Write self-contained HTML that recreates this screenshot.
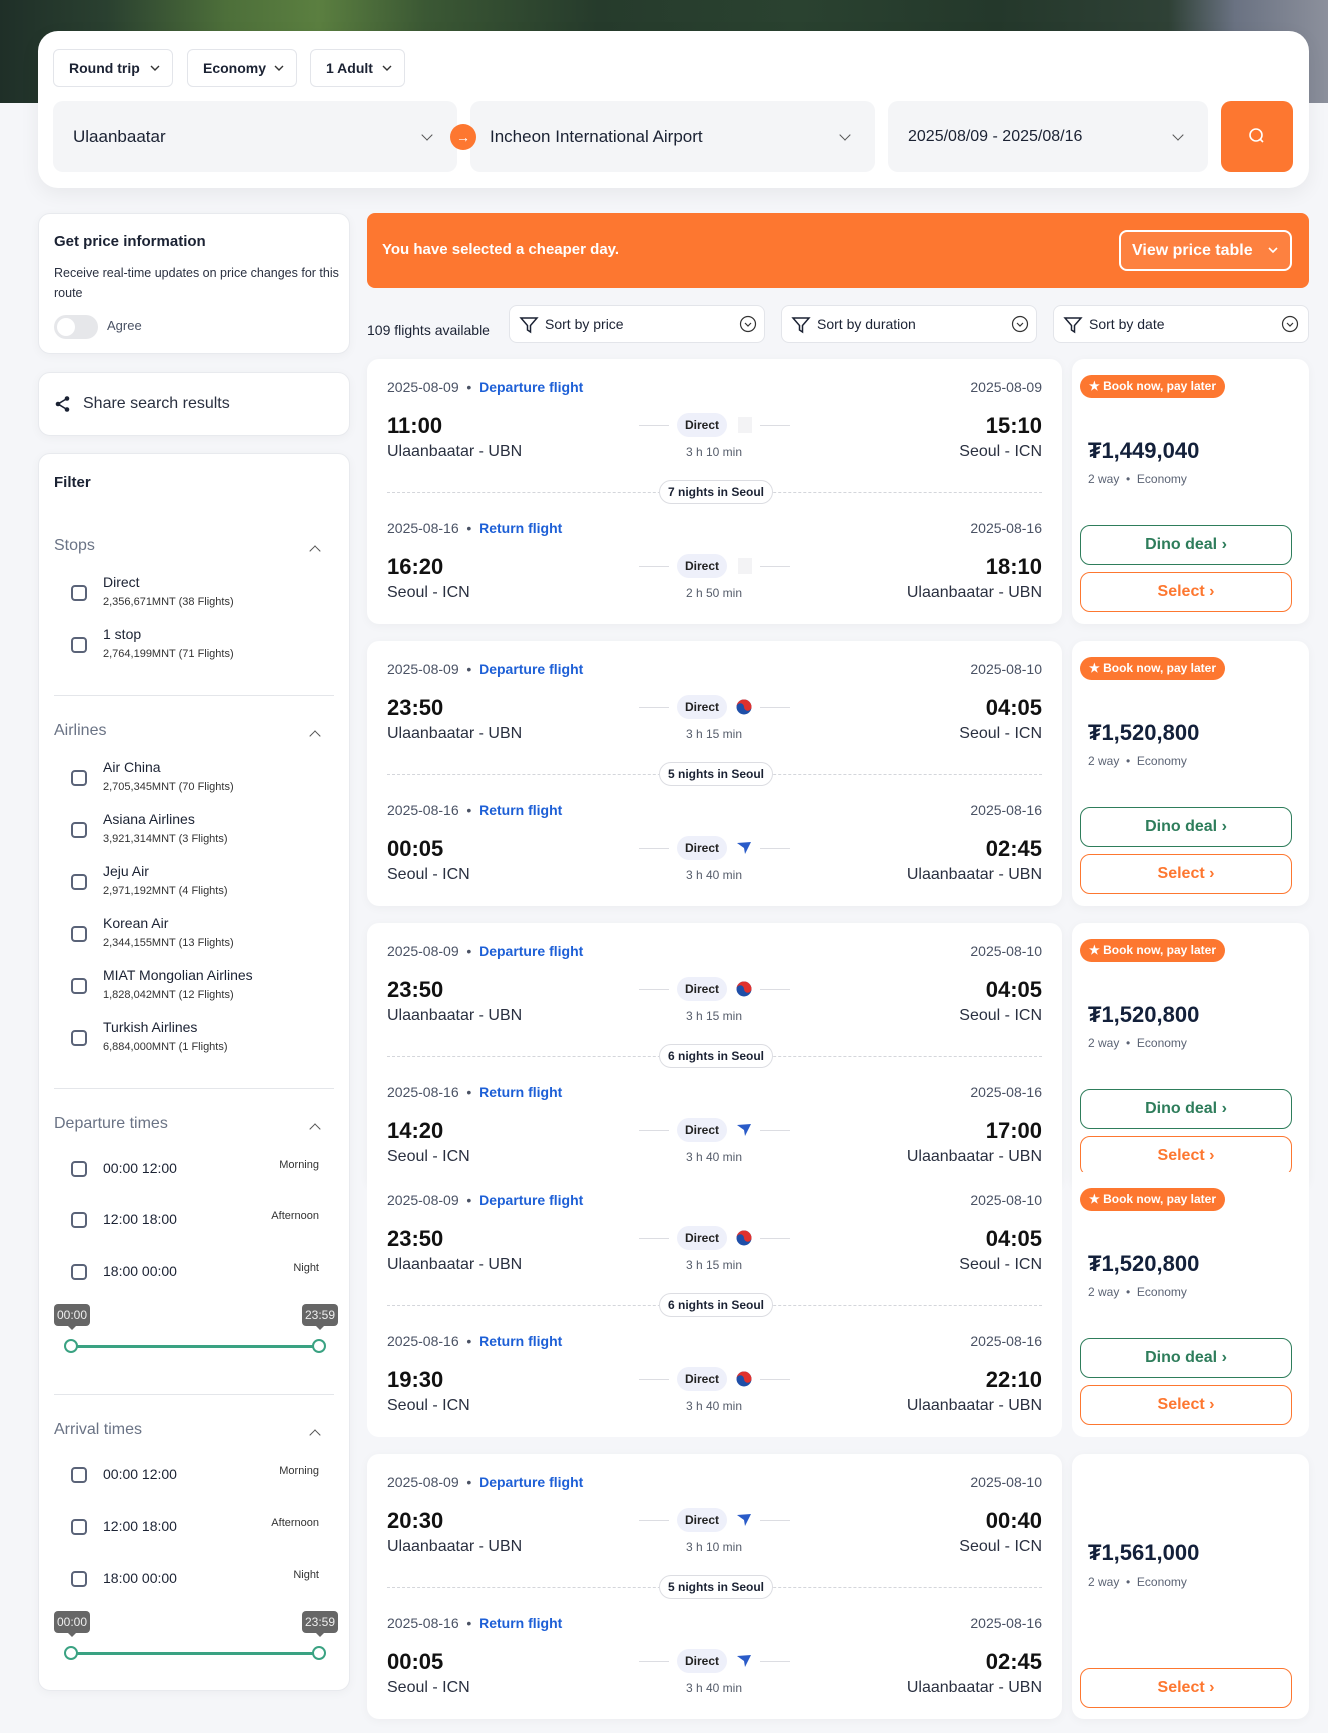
<!DOCTYPE html>
<html><head><meta charset="utf-8">
<style>
*{box-sizing:border-box;margin:0;padding:0}
body{width:1328px;height:1733px;overflow:hidden;background:#f5f6f9;font-family:"Liberation Sans",sans-serif;color:#1b2233;position:relative}
.abs{position:absolute}
.hero{left:0;top:0;width:1328px;height:103px;background:linear-gradient(90deg,#1f2f28 0%,#2a4030 8%,#4d6f3a 17%,#5b7f40 24%,#3b5834 32%,#263b2c 45%,#2a4230 60%,#24382b 75%,#2f4136 88%,#6a7282 93%,#8c909c 100%)}
.search{left:38px;top:31px;width:1271px;height:157px;background:#fff;border-radius:20px;box-shadow:0 6px 20px rgba(0,0,0,.06)}
.pill{top:18px;height:38px;border:1px solid #e3e5ea;border-radius:6px;font-size:14px;font-weight:bold;line-height:36px;padding-left:15px;color:#1b2233}
.pill svg{position:absolute;right:12px;top:15px}
.inp{top:70px;height:71px;background:#f4f5f7;border-radius:10px;font-size:17px;line-height:71px;padding-left:20px}
.chev{position:absolute;right:26px;top:30px;width:8px;height:8px;border-right:1.5px solid #555;border-bottom:1.5px solid #555;transform:rotate(45deg)}
.card{background:#fff;border-radius:12px;box-shadow:0 2px 10px rgba(0,0,0,.04)}
.lc{left:38px;width:312px;border:1px solid #e8eaee}
.fc{left:367px;width:695px;height:265px}
.rc{left:1072px;width:237px;height:265px}
.sm{font-size:14px;color:#4a5264}
.blue{color:#1d5fd6;font-weight:bold}
.time{font-size:22px;font-weight:bold;color:#111}
.city{font-size:16px;color:#2a3040}
.direct{width:50px;height:24px;border-radius:12px;background:#eef0fa;font-size:12px;font-weight:bold;text-align:center;line-height:24px;color:#222}
.hl{height:1px;width:30px;background:#dcdde2}
.dur{font-size:12px;color:#555c6a;width:120px;text-align:center}
.nights{height:24px;border:1px solid #dcdde2;border-radius:12px;background:#fff;font-size:12px;font-weight:bold;line-height:22px;padding:0 8px;}
.dash{left:20px;right:20px;height:0;border-top:1px dashed #d4d6db}
.badge{left:8px;top:16px;height:23px;width:145px;background:#fd7730;border-radius:12px;color:#fff;font-size:12px;font-weight:bold;line-height:23px;padding-left:9px}
.price{left:16px;font-size:22px;font-weight:bold;color:#13203a}
.way{left:16px;font-size:12px;color:#5b6374}
.btn{left:8px;width:212px;height:40px;border-radius:10px;text-align:center;line-height:38px;font-size:16px;font-weight:bold}
.dino{border:1.5px solid #2e7d5b;color:#2e7d5b}
.sel{border:1.5px solid #fd7730;color:#fd7730}
.sort{top:305px;height:38px;background:#fff;border:1px solid #e3e5ea;border-radius:8px;width:256px;font-size:14px;line-height:36px;padding-left:35px}
.cb{width:16px;height:16px;border:2px solid #5a6378;border-radius:4px;left:32px}
.fl{left:64px;font-size:14px;color:#1b2233}
.fs{left:64px;font-size:11px;color:#333}
.fh{left:15px;font-size:16px;color:#6a7385}
.up{right:30px;width:8px;height:8px;border-left:1.5px solid #555;border-top:1.5px solid #555;transform:rotate(45deg)}
.div{left:15px;right:15px;height:1px;background:#e4e6ea}
.tag{font-size:11px;color:#333;right:30px}
.tip{width:36px;height:22px;background:#666;border-radius:4px;color:#eee;font-size:12px;text-align:center;line-height:22px}
.tip:after{content:"";position:absolute;left:14px;bottom:-4px;border:4px solid transparent;border-top-color:#666;border-bottom:0}
.track{left:32px;width:248px;height:3px;background:#3aa282}
.knob{width:14px;height:14px;border-radius:50%;border:2px solid #3aa282;background:#fff}
</style></head><body>
<div class="abs hero"></div>
<div class="abs search">
 <div class="abs pill" style="left:15px;width:120px">Round trip<svg width="10" height="7"><path d="M1 1L5 5L9 1" fill="none" stroke="#333" stroke-width="1.4"/></svg></div>
 <div class="abs pill" style="left:149px;width:110px">Economy<svg width="10" height="7"><path d="M1 1L5 5L9 1" fill="none" stroke="#333" stroke-width="1.4"/></svg></div>
 <div class="abs pill" style="left:272px;width:95px">1 Adult<svg width="10" height="7"><path d="M1 1L5 5L9 1" fill="none" stroke="#333" stroke-width="1.4"/></svg></div>
 <div class="abs inp" style="left:15px;width:404px">Ulaanbaatar<div class="chev"></div></div>
 <div class="abs inp" style="left:432px;width:405px">Incheon International Airport<div class="chev"></div></div>
 <div class="abs" style="left:412px;top:93px;width:26px;height:26px;border-radius:50%;background:#fd7730;color:#fff;font-size:14px;text-align:center;line-height:26px;z-index:2">&#8594;</div>
 <div class="abs inp" style="left:850px;width:320px;font-size:16px">2025/08/09 - 2025/08/16<div class="chev"></div></div>
 <div class="abs" style="left:1183px;top:70px;width:72px;height:71px;background:#fd7730;border-radius:10px">
  <svg width="72" height="71"><circle cx="35" cy="34" r="6" fill="none" stroke="#fff" stroke-width="1.6"/><line x1="39.5" y1="38.5" x2="42" y2="41" stroke="#fff" stroke-width="1.6"/></svg></div>
</div>

<!-- left column -->
<div class="abs card lc" style="top:213px;height:141px">
 <div class="abs" style="left:15px;top:19px;font-size:15px;font-weight:bold">Get price information</div>
 <div class="abs" style="left:15px;top:49px;font-size:12.5px;line-height:20px;color:#2a3040;width:290px">Receive real-time updates on price changes for this route</div>
 <div class="abs" style="left:15px;top:101px;width:44px;height:24px;border-radius:12px;background:#e6e7ea"><div class="abs" style="left:3px;top:3px;width:18px;height:18px;border-radius:50%;background:#fff"></div></div>
 <div class="abs" style="left:68px;top:104px;font-size:13px;color:#4a5264">Agree</div>
</div>
<div class="abs card lc" style="top:372px;height:64px">
 <svg class="abs" style="left:15px;top:22px" width="18" height="18"><circle cx="13" cy="3.5" r="2.3" fill="#1b2233"/><circle cx="4" cy="9" r="2.3" fill="#1b2233"/><circle cx="13" cy="14.5" r="2.3" fill="#1b2233"/><path d="M13 3.5L4 9L13 14.5" stroke="#1b2233" stroke-width="1.6" fill="none"/></svg>
 <div class="abs" style="left:44px;top:22px;font-size:16px;color:#2a3040">Share search results</div>
</div>
<div class="abs card lc" style="top:453px;height:1238px">
 <div class="abs" style="left:15px;top:20px;font-size:15px;font-weight:bold">Filter</div>
 <div class="abs fh" style="top:83px">Stops</div><div class="abs up" style="top:93px"></div>
 <div class="abs cb" style="top:131px"></div><div class="abs fl" style="top:120px">Direct</div><div class="abs fs" style="top:142px">2,356,671MNT (38 Flights)</div>
 <div class="abs cb" style="top:183px"></div><div class="abs fl" style="top:172px">1 stop</div><div class="abs fs" style="top:194px">2,764,199MNT (71 Flights)</div>
 <div class="abs div" style="top:241px"></div>
 <div class="abs fh" style="top:268px">Airlines</div><div class="abs up" style="top:278px"></div>
 <div class="abs cb" style="top:316px"></div><div class="abs fl" style="top:305px">Air China</div><div class="abs fs" style="top:327px">2,705,345MNT (70 Flights)</div>
 <div class="abs cb" style="top:368px"></div><div class="abs fl" style="top:357px">Asiana Airlines</div><div class="abs fs" style="top:379px">3,921,314MNT (3 Flights)</div>
 <div class="abs cb" style="top:420px"></div><div class="abs fl" style="top:409px">Jeju Air</div><div class="abs fs" style="top:431px">2,971,192MNT (4 Flights)</div>
 <div class="abs cb" style="top:472px"></div><div class="abs fl" style="top:461px">Korean Air</div><div class="abs fs" style="top:483px">2,344,155MNT (13 Flights)</div>
 <div class="abs cb" style="top:524px"></div><div class="abs fl" style="top:513px">MIAT Mongolian Airlines</div><div class="abs fs" style="top:535px">1,828,042MNT (12 Flights)</div>
 <div class="abs cb" style="top:576px"></div><div class="abs fl" style="top:565px">Turkish Airlines</div><div class="abs fs" style="top:587px">6,884,000MNT (1 Flights)</div>
 <div class="abs div" style="top:634px"></div>
 <div class="abs fh" style="top:661px">Departure times</div><div class="abs up" style="top:671px"></div>
 <div class="abs cb" style="top:707px"></div><div class="abs fl" style="top:706px">00:00 12:00</div><div class="abs tag" style="top:705px">Morning</div>
 <div class="abs cb" style="top:758px"></div><div class="abs fl" style="top:757px">12:00 18:00</div><div class="abs tag" style="top:756px">Afternoon</div>
 <div class="abs cb" style="top:810px"></div><div class="abs fl" style="top:809px">18:00 00:00</div><div class="abs tag" style="top:808px">Night</div>
 <div class="abs tip" style="left:15px;top:850px">00:00</div><div class="abs tip" style="left:263px;top:850px">23:59</div>
 <div class="abs track" style="top:891px"></div><div class="abs knob" style="left:25px;top:885px"></div><div class="abs knob" style="left:273px;top:885px"></div>
 <div class="abs div" style="top:940px"></div>
 <div class="abs fh" style="top:967px">Arrival times</div><div class="abs up" style="top:977px"></div>
 <div class="abs cb" style="top:1013px"></div><div class="abs fl" style="top:1012px">00:00 12:00</div><div class="abs tag" style="top:1011px">Morning</div>
 <div class="abs cb" style="top:1065px"></div><div class="abs fl" style="top:1064px">12:00 18:00</div><div class="abs tag" style="top:1063px">Afternoon</div>
 <div class="abs cb" style="top:1117px"></div><div class="abs fl" style="top:1116px">18:00 00:00</div><div class="abs tag" style="top:1115px">Night</div>
 <div class="abs tip" style="left:15px;top:1157px">00:00</div><div class="abs tip" style="left:263px;top:1157px">23:59</div>
 <div class="abs track" style="top:1198px"></div><div class="abs knob" style="left:25px;top:1192px"></div><div class="abs knob" style="left:273px;top:1192px"></div>
</div>

<!-- banner -->
<div class="abs" style="left:367px;top:213px;width:942px;height:75px;background:#fd7730;border-radius:8px">
 <div class="abs" style="left:15px;top:28px;color:#fff;font-size:15px;font-weight:bold">You have selected a cheaper day.</div>
 <div class="abs" style="left:752px;top:17px;width:173px;height:41px;border:2px solid #fff;border-radius:8px;color:#fff;font-size:16px;font-weight:bold;line-height:37px;padding-left:11px;background:rgba(255,255,255,.08)">View price table<svg class="abs" style="right:12px;top:15px" width="10" height="7"><path d="M1 1L5 5L9 1" fill="none" stroke="#fff" stroke-width="1.6"/></svg></div>
</div>
<div class="abs" style="left:367px;top:322px;font-size:14px;color:#1b2233">109 flights available</div>
<div class="abs sort" style="left:509px">Sort by price</div>
<div class="abs sort" style="left:781px">Sort by duration</div>
<div class="abs sort" style="left:1053px">Sort by date</div>
<svg class="abs" style="left:519px;top:315px" width="20" height="20"><path d="M2 3H18L11.5 10.5V17L8.5 15V10.5Z" fill="none" stroke="#1b2233" stroke-width="1.5"/></svg>
<svg class="abs" style="left:791px;top:315px" width="20" height="20"><path d="M2 3H18L11.5 10.5V17L8.5 15V10.5Z" fill="none" stroke="#1b2233" stroke-width="1.5"/></svg>
<svg class="abs" style="left:1063px;top:315px" width="20" height="20"><path d="M2 3H18L11.5 10.5V17L8.5 15V10.5Z" fill="none" stroke="#1b2233" stroke-width="1.5"/></svg>
<svg class="abs" style="left:739px;top:315px" width="18" height="18"><circle cx="9" cy="9" r="7.5" fill="none" stroke="#333" stroke-width="1.2"/><path d="M6 8L9 11L12 8" fill="none" stroke="#333" stroke-width="1.2"/></svg>
<svg class="abs" style="left:1011px;top:315px" width="18" height="18"><circle cx="9" cy="9" r="7.5" fill="none" stroke="#333" stroke-width="1.2"/><path d="M6 8L9 11L12 8" fill="none" stroke="#333" stroke-width="1.2"/></svg>
<svg class="abs" style="left:1281px;top:315px" width="18" height="18"><circle cx="9" cy="9" r="7.5" fill="none" stroke="#333" stroke-width="1.2"/><path d="M6 8L9 11L12 8" fill="none" stroke="#333" stroke-width="1.2"/></svg>

<!-- CARD 1 -->
<div class="abs card fc" style="top:359px">
 <div class="abs sm" style="left:20px;top:20px">2025-08-09 &nbsp;•&nbsp; <span class="blue">Departure flight</span></div>
 <div class="abs sm" style="right:20px;top:20px">2025-08-09</div>
 <div class="abs time" style="left:20px;top:54px">11:00</div><div class="abs time" style="right:20px;top:54px">15:10</div>
 <div class="abs city" style="left:20px;top:84px">Ulaanbaatar - UBN</div><div class="abs city" style="right:20px;top:84px">Seoul - ICN</div>
 <div class="abs hl" style="left:272px;top:66px"></div><div class="abs direct" style="left:310px;top:54px">Direct</div><div class="abs" style="left:371px;top:58px;width:14px;height:16px;background:#f3f3f5"></div><div class="abs hl" style="left:393px;top:66px"></div>
 <div class="abs dur" style="left:287px;top:86px">3 h 10 min</div>
 <div class="abs dash" style="top:133px"></div><div class="abs nights" style="left:292px;top:121px">7 nights in Seoul</div>
 <div class="abs sm" style="left:20px;top:161px">2025-08-16 &nbsp;•&nbsp; <span class="blue">Return flight</span></div>
 <div class="abs sm" style="right:20px;top:161px">2025-08-16</div>
 <div class="abs time" style="left:20px;top:195px">16:20</div><div class="abs time" style="right:20px;top:195px">18:10</div>
 <div class="abs city" style="left:20px;top:225px">Seoul - ICN</div><div class="abs city" style="right:20px;top:225px">Ulaanbaatar - UBN</div>
 <div class="abs hl" style="left:272px;top:207px"></div><div class="abs direct" style="left:310px;top:195px">Direct</div><div class="abs" style="left:371px;top:199px;width:14px;height:16px;background:#f3f3f5"></div><div class="abs hl" style="left:393px;top:207px"></div>
 <div class="abs dur" style="left:287px;top:227px">2 h 50 min</div>
</div>
<div class="abs card rc" style="top:359px">
 <div class="abs badge">★ Book now, pay later</div>
 <div class="abs price" style="top:79px">₮1,449,040</div>
 <div class="abs way" style="top:113px">2 way &nbsp;•&nbsp; Economy</div>
 <div class="abs btn dino" style="top:166px">Dino deal ›</div>
 <div class="abs btn sel" style="top:213px">Select ›</div>
</div>

<!-- CARD 2 -->
<div class="abs card fc" style="top:641px">
 <div class="abs sm" style="left:20px;top:20px">2025-08-09 &nbsp;•&nbsp; <span class="blue">Departure flight</span></div>
 <div class="abs sm" style="right:20px;top:20px">2025-08-10</div>
 <div class="abs time" style="left:20px;top:54px">23:50</div><div class="abs time" style="right:20px;top:54px">04:05</div>
 <div class="abs city" style="left:20px;top:84px">Ulaanbaatar - UBN</div><div class="abs city" style="right:20px;top:84px">Seoul - ICN</div>
 <div class="abs hl" style="left:272px;top:66px"></div><div class="abs direct" style="left:310px;top:54px">Direct</div>
 <svg class="abs" style="left:369px;top:58px" width="16" height="16"><circle cx="8" cy="8" r="7.5" fill="#1f4fa8"/><path d="M0.5 8A7.5 7.5 0 0 1 15.5 8A3.75 3.75 0 0 1 8 8A3.75 3.75 0 0 0 0.5 8Z" fill="#e0312e"/></svg>
 <div class="abs hl" style="left:393px;top:66px"></div>
 <div class="abs dur" style="left:287px;top:86px">3 h 15 min</div>
 <div class="abs dash" style="top:133px"></div><div class="abs nights" style="left:292px;top:121px">5 nights in Seoul</div>
 <div class="abs sm" style="left:20px;top:161px">2025-08-16 &nbsp;•&nbsp; <span class="blue">Return flight</span></div>
 <div class="abs sm" style="right:20px;top:161px">2025-08-16</div>
 <div class="abs time" style="left:20px;top:195px">00:05</div><div class="abs time" style="right:20px;top:195px">02:45</div>
 <div class="abs city" style="left:20px;top:225px">Seoul - ICN</div><div class="abs city" style="right:20px;top:225px">Ulaanbaatar - UBN</div>
 <div class="abs hl" style="left:272px;top:207px"></div><div class="abs direct" style="left:310px;top:195px">Direct</div>
 <svg class="abs" style="left:369px;top:200px" width="16" height="14"><path d="M1 2L15 1L9 13L8 7Z" fill="#2a5bc8"/></svg>
 <div class="abs hl" style="left:393px;top:207px"></div>
 <div class="abs dur" style="left:287px;top:227px">3 h 40 min</div>
</div>
<div class="abs card rc" style="top:641px">
 <div class="abs badge">★ Book now, pay later</div>
 <div class="abs price" style="top:79px">₮1,520,800</div>
 <div class="abs way" style="top:113px">2 way &nbsp;•&nbsp; Economy</div>
 <div class="abs btn dino" style="top:166px">Dino deal ›</div>
 <div class="abs btn sel" style="top:213px">Select ›</div>
</div>

<!-- CARD 3 -->
<div class="abs card fc" style="top:923px">
 <div class="abs sm" style="left:20px;top:20px">2025-08-09 &nbsp;•&nbsp; <span class="blue">Departure flight</span></div>
 <div class="abs sm" style="right:20px;top:20px">2025-08-10</div>
 <div class="abs time" style="left:20px;top:54px">23:50</div><div class="abs time" style="right:20px;top:54px">04:05</div>
 <div class="abs city" style="left:20px;top:84px">Ulaanbaatar - UBN</div><div class="abs city" style="right:20px;top:84px">Seoul - ICN</div>
 <div class="abs hl" style="left:272px;top:66px"></div><div class="abs direct" style="left:310px;top:54px">Direct</div>
 <svg class="abs" style="left:369px;top:58px" width="16" height="16"><circle cx="8" cy="8" r="7.5" fill="#1f4fa8"/><path d="M0.5 8A7.5 7.5 0 0 1 15.5 8A3.75 3.75 0 0 1 8 8A3.75 3.75 0 0 0 0.5 8Z" fill="#e0312e"/></svg>
 <div class="abs hl" style="left:393px;top:66px"></div>
 <div class="abs dur" style="left:287px;top:86px">3 h 15 min</div>
 <div class="abs dash" style="top:133px"></div><div class="abs nights" style="left:292px;top:121px">6 nights in Seoul</div>
 <div class="abs sm" style="left:20px;top:161px">2025-08-16 &nbsp;•&nbsp; <span class="blue">Return flight</span></div>
 <div class="abs sm" style="right:20px;top:161px">2025-08-16</div>
 <div class="abs time" style="left:20px;top:195px">14:20</div><div class="abs time" style="right:20px;top:195px">17:00</div>
 <div class="abs city" style="left:20px;top:225px">Seoul - ICN</div><div class="abs city" style="right:20px;top:225px">Ulaanbaatar - UBN</div>
 <div class="abs hl" style="left:272px;top:207px"></div><div class="abs direct" style="left:310px;top:195px">Direct</div>
 <svg class="abs" style="left:369px;top:200px" width="16" height="14"><path d="M1 2L15 1L9 13L8 7Z" fill="#2a5bc8"/></svg>
 <div class="abs hl" style="left:393px;top:207px"></div>
 <div class="abs dur" style="left:287px;top:227px">3 h 40 min</div>
</div>
<div class="abs card rc" style="top:923px">
 <div class="abs badge">★ Book now, pay later</div>
 <div class="abs price" style="top:79px">₮1,520,800</div>
 <div class="abs way" style="top:113px">2 way &nbsp;•&nbsp; Economy</div>
 <div class="abs btn dino" style="top:166px">Dino deal ›</div>
 <div class="abs btn sel" style="top:213px">Select ›</div>
</div>

<!-- CARD 4 -->
<div class="abs fc" style="top:1172px;background:#fff;border-radius:0 0 12px 12px">
 <div class="abs sm" style="left:20px;top:20px">2025-08-09 &nbsp;•&nbsp; <span class="blue">Departure flight</span></div>
 <div class="abs sm" style="right:20px;top:20px">2025-08-10</div>
 <div class="abs time" style="left:20px;top:54px">23:50</div><div class="abs time" style="right:20px;top:54px">04:05</div>
 <div class="abs city" style="left:20px;top:84px">Ulaanbaatar - UBN</div><div class="abs city" style="right:20px;top:84px">Seoul - ICN</div>
 <div class="abs hl" style="left:272px;top:66px"></div><div class="abs direct" style="left:310px;top:54px">Direct</div>
 <svg class="abs" style="left:369px;top:58px" width="16" height="16"><circle cx="8" cy="8" r="7.5" fill="#1f4fa8"/><path d="M0.5 8A7.5 7.5 0 0 1 15.5 8A3.75 3.75 0 0 1 8 8A3.75 3.75 0 0 0 0.5 8Z" fill="#e0312e"/></svg>
 <div class="abs hl" style="left:393px;top:66px"></div>
 <div class="abs dur" style="left:287px;top:86px">3 h 15 min</div>
 <div class="abs dash" style="top:133px"></div><div class="abs nights" style="left:292px;top:121px">6 nights in Seoul</div>
 <div class="abs sm" style="left:20px;top:161px">2025-08-16 &nbsp;•&nbsp; <span class="blue">Return flight</span></div>
 <div class="abs sm" style="right:20px;top:161px">2025-08-16</div>
 <div class="abs time" style="left:20px;top:195px">19:30</div><div class="abs time" style="right:20px;top:195px">22:10</div>
 <div class="abs city" style="left:20px;top:225px">Seoul - ICN</div><div class="abs city" style="right:20px;top:225px">Ulaanbaatar - UBN</div>
 <div class="abs hl" style="left:272px;top:207px"></div><div class="abs direct" style="left:310px;top:195px">Direct</div>
 <svg class="abs" style="left:369px;top:199px" width="16" height="16"><circle cx="8" cy="8" r="7.5" fill="#1f4fa8"/><path d="M0.5 8A7.5 7.5 0 0 1 15.5 8A3.75 3.75 0 0 1 8 8A3.75 3.75 0 0 0 0.5 8Z" fill="#e0312e"/></svg>
 <div class="abs hl" style="left:393px;top:207px"></div>
 <div class="abs dur" style="left:287px;top:227px">3 h 40 min</div>
</div>
<div class="abs rc" style="top:1172px;background:#fff;border-radius:0 0 12px 12px">
 <div class="abs badge">★ Book now, pay later</div>
 <div class="abs price" style="top:79px">₮1,520,800</div>
 <div class="abs way" style="top:113px">2 way &nbsp;•&nbsp; Economy</div>
 <div class="abs btn dino" style="top:166px">Dino deal ›</div>
 <div class="abs btn sel" style="top:213px">Select ›</div>
</div>

<!-- CARD 5 -->
<div class="abs card fc" style="top:1454px">
 <div class="abs sm" style="left:20px;top:20px">2025-08-09 &nbsp;•&nbsp; <span class="blue">Departure flight</span></div>
 <div class="abs sm" style="right:20px;top:20px">2025-08-10</div>
 <div class="abs time" style="left:20px;top:54px">20:30</div><div class="abs time" style="right:20px;top:54px">00:40</div>
 <div class="abs city" style="left:20px;top:84px">Ulaanbaatar - UBN</div><div class="abs city" style="right:20px;top:84px">Seoul - ICN</div>
 <div class="abs hl" style="left:272px;top:66px"></div><div class="abs direct" style="left:310px;top:54px">Direct</div>
 <svg class="abs" style="left:369px;top:59px" width="16" height="14"><path d="M1 2L15 1L9 13L8 7Z" fill="#2a5bc8"/></svg>
 <div class="abs hl" style="left:393px;top:66px"></div>
 <div class="abs dur" style="left:287px;top:86px">3 h 10 min</div>
 <div class="abs dash" style="top:133px"></div><div class="abs nights" style="left:292px;top:121px">5 nights in Seoul</div>
 <div class="abs sm" style="left:20px;top:161px">2025-08-16 &nbsp;•&nbsp; <span class="blue">Return flight</span></div>
 <div class="abs sm" style="right:20px;top:161px">2025-08-16</div>
 <div class="abs time" style="left:20px;top:195px">00:05</div><div class="abs time" style="right:20px;top:195px">02:45</div>
 <div class="abs city" style="left:20px;top:225px">Seoul - ICN</div><div class="abs city" style="right:20px;top:225px">Ulaanbaatar - UBN</div>
 <div class="abs hl" style="left:272px;top:207px"></div><div class="abs direct" style="left:310px;top:195px">Direct</div>
 <svg class="abs" style="left:369px;top:200px" width="16" height="14"><path d="M1 2L15 1L9 13L8 7Z" fill="#2a5bc8"/></svg>
 <div class="abs hl" style="left:393px;top:207px"></div>
 <div class="abs dur" style="left:287px;top:227px">3 h 40 min</div>
</div>
<div class="abs card rc" style="top:1454px">
 <div class="abs price" style="top:86px">₮1,561,000</div>
 <div class="abs way" style="top:121px">2 way &nbsp;•&nbsp; Economy</div>
 <div class="abs btn sel" style="top:214px">Select ›</div>
</div>
</body></html>
